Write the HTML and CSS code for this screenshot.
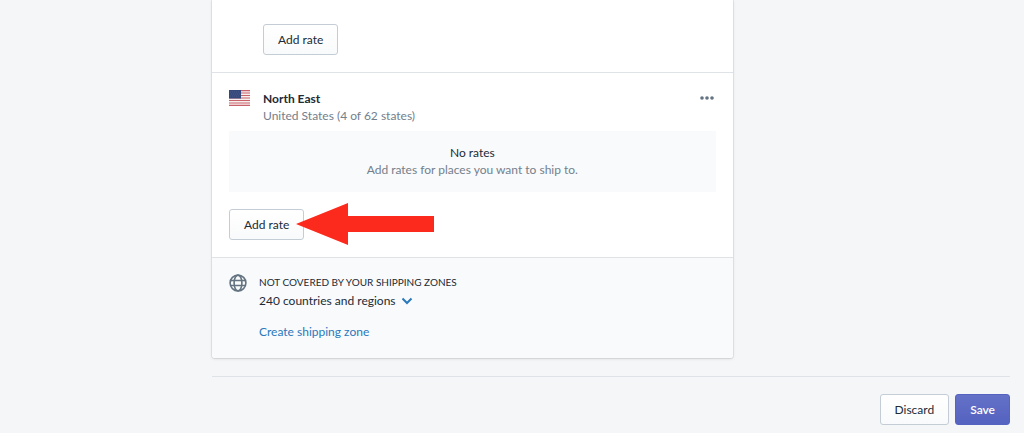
FILE: index.html
```html
<!DOCTYPE html>
<html lang="en">
<head>
    <meta charset="UTF-8" />
    <meta name="viewport" content="width=device-width, initial-scale=1" />
    <title>Shipping zones</title>
    <link rel="stylesheet" href="styles.css">
</head>
<body>

    <main class="page">
        <div class="columns">
            <div class="card">

                <section class="zone zone-top">
                    <button type="button" class="btn">Add rate</button>
                </section>

                <section class="zone">
                    <div class="zone-header">
                        <svg class="flag" viewBox="0 0 21 16" aria-hidden="true">
                            <rect width="21" height="16" fill="#f7eeee" />
                            <path d="M0 .6h21M0 3h21M0 5.500h21M0 8h21M0 10.500h21M0 13h21M0 15.400h21" stroke="#c9616b" stroke-width="1.200" />
                            <rect width="12" height="8.500" fill="#35487c" />
                            <path d="M1 2h10M2 4h9M1 6h10" stroke="#53648f" stroke-width=".6" stroke-dasharray="1 1" />
                        </svg>
                        <div class="zone-name">
                            <h2>North East</h2>
                            <p class="subdued">United States (4 of 62 states)</p>
                        </div>
                        <button type="button" class="more" aria-label="More actions">
                            <svg viewBox="0 0 14 4" aria-hidden="true">
                                <circle cx="2" cy="2" r="1.800" />
                                <circle cx="7" cy="2" r="1.800" />
                                <circle cx="12" cy="2" r="1.800" />
                            </svg>
                        </button>
                    </div>

                    <div class="empty">
                        <p>No rates</p>
                        <p class="subdued">Add rates for places you want to ship to.</p>
                    </div>

                    <div class="zone-action">
                        <button type="button" class="btn">Add rate</button>
                        <svg class="arrow" viewBox="0 0 138 42" aria-hidden="true">
                            <path d="M0 21L52 0V13H138V29H52V42Z" fill="#fb2a1c" />
                        </svg>
                    </div>
                </section>

                <section class="zone uncovered">
                    <svg class="globe" viewBox="0 0 18 18" aria-hidden="true">
                        <circle cx="9" cy="9" r="7.900" />
                        <ellipse cx="9" cy="9" rx="3.900" ry="7.900" />
                        <path d="M1.500 6.500h15M1.500 11.500h15" />
                    </svg>
                    <div>
                        <h3>Not covered by your shipping zones</h3>
                        <button type="button" class="countries">
                            240 countries and regions
                            <svg viewBox="0 0 12 8" aria-hidden="true">
                                <path d="M1.500 1.500L6 6L10.500 1.500" />
                            </svg>
                        </button>
                        <a href="#">Create shipping zone</a>
                    </div>
                </section>

            </div>
        </div>

        <footer>
            <button type="button" class="btn">Discard</button>
            <button type="submit" class="btn primary">Save</button>
        </footer>
    </main>

</body>
</html>
```
FILE: styles.css
```css
* {
    box-sizing: border-box;
}

body {
    margin: 0;
    background-color: #f4f6f8;
    color: #212b36;
    font-family: Lato, "Open Sans", sans-serif;
    font-size: 12px;
    line-height: 17px;
}

h2,
h3,
p {
    margin: 0;
}

svg {
    display: block;
}

button {
    font: inherit;
    cursor: pointer;
}

.page {
    padding: 0 14px 8px 212px;
}

.columns {
    display: grid;
    grid-template-columns: 2fr 1fr;
    gap: 17px;
}

.card {
    background-color: white;
    border-radius: 0 0 3px 3px;
    box-shadow: 0 0 0 1px rgba(63, 63, 68, 0.08), 0 1px 3px rgba(63, 63, 68, 0.15);
}

.zone {
    padding: 17px;
}

.zone + .zone {
    border-top: 1px solid #dfe3e8;
}

.zone-top {
    padding-top: 24px;
    padding-left: 51px;
}

.btn {
    display: block;
    height: 31px;
    padding: 0 14px;
    border: 1px solid #c4cdd5;
    border-radius: 3px;
    background: linear-gradient(to bottom, white, #f9fafb);
    color: #212b36;
}

.btn:hover {
    background: #f4f6f8;
}

.primary {
    border-color: #5563c1;
    background: linear-gradient(to bottom, #6371c7, #5563c1);
    color: white;
    font-weight: 600;
}

.primary:hover {
    background: #5563c1;
}

.subdued {
    color: #73808c;
}

.zone-header {
    display: flex;
    align-items: flex-start;
}

.flag {
    width: 21px;
    height: 16px;
    margin-right: 13px;
}

.zone-name {
    flex: 1;
}

h2 {
    font-size: 12px;
    font-weight: 700;
}

.more {
    padding: 6px 2px;
    border: none;
    background: none;
}

.more svg {
    width: 14px;
    height: 4px;
    fill: #637381;
}

.empty {
    margin: 7px 0 17px;
    padding: 13px 14px 14px;
    background-color: #f9fafb;
    text-align: center;
}

.zone-action {
    position: relative;
}

.arrow {
    position: absolute;
    top: -6px;
    left: 67px;
    width: 138px;
    height: 42px;
    pointer-events: none;
}

.uncovered {
    display: flex;
    gap: 12px;
    padding-top: 16px;
    padding-bottom: 18px;
    border-radius: 0 0 3px 3px;
    background-color: #f9fafb;
}

.globe {
    width: 18px;
    height: 18px;
    fill: none;
    stroke: #637381;
    stroke-width: 1.6;
}

h3 {
    font-size: 10px;
    font-weight: 400;
    text-transform: uppercase;
}

.countries {
    display: flex;
    align-items: center;
    gap: 5px;
    margin: 1px 0 14px;
    padding: 0;
    border: none;
    background: none;
    color: #212b36;
}

.countries svg {
    width: 12px;
    height: 8px;
    fill: none;
    stroke: #2a78bd;
    stroke-width: 2;
}

a {
    color: #2a78bd;
    text-decoration: none;
}

a:hover {
    text-decoration: underline;
}

footer {
    display: flex;
    justify-content: flex-end;
    gap: 6px;
    margin-top: 18px;
    padding-top: 17px;
    border-top: 1px solid #dfe3e8;
}
```
